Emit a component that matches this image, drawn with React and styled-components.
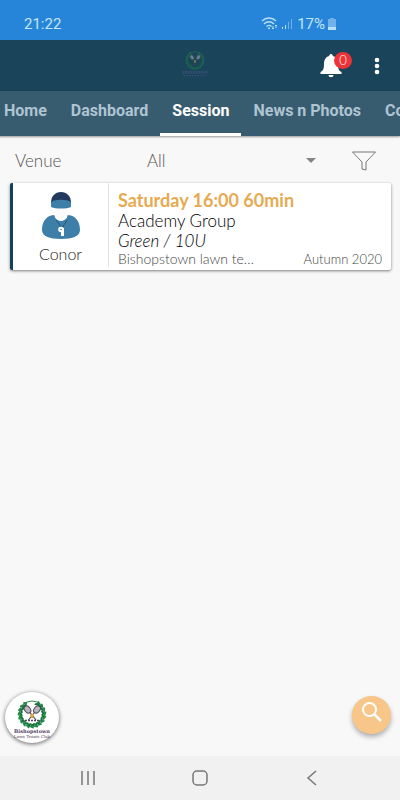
import { useState } from "react";
import styled, { createGlobalStyle } from "styled-components";

const TABS = ["Home", "Dashboard", "Session", "News n Photos", "Coaches"];

const SESSIONS = [
  {
    id: 1,
    coach: "Conor",
    time: "Saturday 16:00 60min",
    group: "Academy Group",
    level: "Green / 10U",
    venue: "Bishopstown lawn tennis club",
    term: "Autumn 2020",
  },
];

const LEAVES = Array.from({ length: 17 }, (_, i) => 32 + i * 18.5 - 90);

function Crest() {
  return (
    <g>
      <circle cx="27" cy="21" r="13" fill="none" stroke="#2f8a4c" strokeWidth="1" />
      {LEAVES.map((a) => (
        <g key={a} transform={`rotate(${a} 27 21)`}>
          <ellipse cx="38" cy="20" rx="1.2" ry="2.6" fill="#14743a" transform="rotate(-35 38 20)" />
          <ellipse cx="40" cy="21" rx="1" ry="2.2" fill="#248849" transform="rotate(30 40 21)" />
        </g>
      ))}
      <g stroke="#4a4452" fill="#b9b5bf">
        <ellipse cx="22.5" cy="16.5" rx="2.8" ry="4" transform="rotate(-38 22.5 16.5)" />
        <ellipse cx="32" cy="16.5" rx="2.8" ry="4" transform="rotate(38 32 16.5)" />
        <path d="M25 19.500L31 27M29.500 19.500L23.500 27" fill="none" strokeWidth="1.2" />
      </g>
      <path d="M25 21h4l-1 4h-2z" fill="#d8a63a" />
      <path d="M20 27.500h14" stroke="#54405e" strokeWidth="1.600" strokeDasharray="2 1" />
    </g>
  );
}

function ClubLogo({ name }) {
  return (
    <svg width="54" height="50" viewBox="0 0 54 50" role="img" aria-label={name}>
      <Crest />
      <text x="27" y="40" textAnchor="middle" fontSize="5" fontWeight="700" fill="#563c66">
        Bishopstown
      </text>
      <text x="27" y="45" textAnchor="middle" fontSize="4" fill="#563c66">
        Lawn Tennis Club
      </text>
    </svg>
  );
}

function CoachIcon() {
  return (
    <svg width="40" height="48" viewBox="0 0 40 48" aria-hidden="true">
      <path d="M14 23C6 23 1 29 1 38c0 6 7 9 19 9s19-3 19-9c0-9-5-15-13-15 2 7-14 7-12 0z" fill="#3d7fa9" />
      <path d="M12 15c0 8 3 14 8 14s8-6 8-14z" fill="#fbfbfb" />
      <path d="M10 11C10 4 14 0 20 0s10 4 10 11z" fill="#233a5e" />
      <path d="M10 10c4-3 16-3 20 0v5c-5 2-15 2-20 0z" fill="#3d7fa9" />
      <path d="M15 28l6 8 5-8" fill="none" stroke="#234a68" strokeWidth="0.800" />
      <circle cx="20" cy="37.500" r="2.800" fill="#fff" />
      <path d="M20 36h3v8h-3z" fill="#fff" />
      <circle cx="20" cy="37.500" r="0.800" fill="#3d7fa9" />
    </svg>
  );
}

export default function App() {
  const [activeTab, setActiveTab] = useState("Session");
  const [venue, setVenue] = useState("All");

  return (
    <>
      <GlobalStyle />
      <Screen>
        <StatusBar>
          <span>21:22</span>
          <StatusRight>
            <svg width="18" height="16" viewBox="0 0 18 16" fill="none" stroke="#b9e0f7" strokeWidth="1.300">
              <path d="M1 5c4-4 10-4 14 0M3 8c3-3 7-3 10 0M5.500 10.500c2-1.500 3.500-1.500 5 0" />
              <path d="M7 12h2l-1 1zM12 10v3m-1-1l1 1 1-1M15 12V9m-1 1l1-1 1 1" strokeWidth="1" />
            </svg>
            <svg width="12" height="12" viewBox="0 0 12 12" fill="#b9e0f7">
              <path d="M0 9h1v2H0zM3 7h1v4H3z" />
              <path d="M6 4h1v7H6zM9 1h1v10H9z" opacity="0.5" />
            </svg>
            <span>17%</span>
            <svg width="8" height="12" viewBox="0 0 8 12" fill="#b9e0f7">
              <path d="M2 0h4v1h2v9H0V1h2z" opacity="0.5" />
              <path d="M0 9h8v3H0z" />
            </svg>
          </StatusRight>
        </StatusBar>

        <AppBar>
          <span />
          <HeaderLogo>
            <svg width="28" height="28" viewBox="7 4 40 42" role="img" aria-label="Club crest">
              <Crest />
              <path d="M8 39h38" stroke="#4c5685" strokeWidth="4" strokeDasharray="3 1" />
              <path d="M10 44h34" stroke="#4c5685" strokeWidth="2" strokeDasharray="3 1" />
            </svg>
          </HeaderLogo>
          <Actions>
            <BellButton aria-label="Notifications">
              <svg width="22" height="24" viewBox="0 0 22 24" fill="#fff">
                <path d="M11 0c-1.300 0-1.800 1-1.800 2C5.500 3 4 6 4 10c0 5-1 7-3.500 8v2h21v-2C19 17 18 15 18 10c0-4-1.500-7-5.200-8 0-1-.5-2-1.800-2zM8.500 21h5c0 3-5 3-5 0z" />
              </svg>
              <Badge>0</Badge>
            </BellButton>
            <IconButton aria-label="More options">
              <svg width="6" height="18" viewBox="0 0 6 18" fill="#fff">
                <circle cx="3" cy="3" r="2.300" />
                <circle cx="3" cy="9" r="2.300" />
                <circle cx="3" cy="15" r="2.300" />
              </svg>
            </IconButton>
          </Actions>
        </AppBar>

        <Tabs>
          {TABS.map((tab) => (
            <Tab key={tab} $active={tab === activeTab} onClick={() => setActiveTab(tab)}>
              {tab}
            </Tab>
          ))}
        </Tabs>

        <Content>
          <Filters>
            <VenueLabel htmlFor="venue">Venue</VenueLabel>
            <SelectWrap>
              <VenueSelect id="venue" value={venue} onChange={(e) => setVenue(e.target.value)}>
                <option>All</option>
              </VenueSelect>
              <svg width="10" height="5" viewBox="0 0 10 5" fill="#858585">
                <path d="M0 0h10L5 5z" />
              </svg>
            </SelectWrap>
            <IconButton aria-label="Filter">
              <svg width="24" height="20" viewBox="0 0 24 20" fill="none" stroke="#777">
                <path d="M.5 1h23L14 11v8l-4-1v-7z" />
              </svg>
            </IconButton>
          </Filters>

          {SESSIONS.map((s) => (
            <SessionCard key={s.id}>
              <Coach>
                <CoachIcon />
                <CoachName>{s.coach}</CoachName>
              </Coach>
              <Details>
                <Time>{s.time}</Time>
                <Group>{s.group}</Group>
                <Level>{s.level}</Level>
                <Meta>
                  <VenueName>{s.venue}</VenueName>
                  <Term>{s.term}</Term>
                </Meta>
              </Details>
            </SessionCard>
          ))}
        </Content>

        <FloatingRow>
          <ClubButton>
            <ClubLogo name="Bishopstown Lawn Tennis Club" />
          </ClubButton>
          <SearchButton aria-label="Search">
            <svg width="20" height="20" viewBox="0 0 20 20" fill="none" stroke="#fff" strokeWidth="2">
              <circle cx="7.500" cy="7.500" r="6.500" />
              <path d="M12 12l7 7" strokeWidth="2.500" />
            </svg>
          </SearchButton>
        </FloatingRow>

        <SystemNav>
          <IconButton aria-label="Recent apps">
            <svg width="16" height="16" viewBox="0 0 16 16" stroke="#777" strokeWidth="1.500">
              <path d="M2 1v14M8 1v14M14 1v14" />
            </svg>
          </IconButton>
          <IconButton aria-label="Home screen">
            <svg width="16" height="16" viewBox="0 0 16 16" fill="none" stroke="#777" strokeWidth="1.500">
              <rect x="1" y="1" width="14" height="14" rx="4" />
            </svg>
          </IconButton>
          <IconButton aria-label="Back">
            <svg width="16" height="16" viewBox="0 0 16 16" fill="none" stroke="#777" strokeWidth="1.500">
              <path d="M12 1L4 8l8 7" />
            </svg>
          </IconButton>
        </SystemNav>
      </Screen>
    </>
  );
}

/* ============ Styles ============ */
const GlobalStyle = createGlobalStyle`
  * {
    box-sizing: border-box;
  }
  body {
    margin: 0;
    background: #f8f8f8;
    font-family: Lato, sans-serif;
  }
  svg {
    display: block;
    flex-shrink: 0;
  }
  button {
    border: 0;
    padding: 0;
    background: none;
    font: inherit;
    cursor: pointer;
  }
`;
const Screen = styled.div`
  min-height: 100vh;
  display: flex;
  flex-direction: column;
  overflow: hidden;
`;
const StatusBar = styled.div`
  height: 40px;
  padding: 8px 64px 0 24px;
  display: flex;
  align-items: center;
  justify-content: space-between;
  background: #2685d8;
  color: #c2e6fa;
  font: 15px/20px Roboto, sans-serif;
`;
const StatusRight = styled.div`
  display: flex;
  align-items: center;
  gap: 3px;
`;
const AppBar = styled.header`
  height: 51px;
  padding: 0 20px;
  display: grid;
  grid-template-columns: 1fr auto 1fr;
  align-items: center;
  background: #19445a;
`;
const HeaderLogo = styled.div`
  margin: 0 10px 6px 0;
  opacity: 0.5;
`;
const Actions = styled.div`
  display: flex;
  align-items: center;
  justify-content: flex-end;
  gap: 32px;
`;
const IconButton = styled.button`
  display: grid;
  place-items: center;
`;
const BellButton = styled(IconButton)`
  position: relative;
`;
const Badge = styled.span`
  position: absolute;
  top: -2px;
  left: 14px;
  width: 18px;
  height: 17px;
  border-radius: 50%;
  background: #ee3338;
  color: #fff;
  font-size: 13px;
  font-weight: 300;
  line-height: 17px;
  text-align: center;
`;
const Tabs = styled.nav`
  height: 45px;
  display: flex;
  margin-left: -8px;
  background: #375c70;
  box-shadow: 0 1px 2px rgba(0, 0, 0, 0.4);
`;
const Tab = styled.button`
  && {
    flex-shrink: 0;
    padding: 0 12px 2px;
    border-bottom: 3px solid ${(p) => (p.$active ? "#fff" : "transparent")};
    color: ${(p) => (p.$active ? "#fff" : "#afc4d2")};
    font: 700 16px/20px Roboto, sans-serif;
  }
`;
const Content = styled.main`
  flex: 1;
  padding: 0 9px 0 10px;
`;
const Filters = styled.div`
  display: flex;
  align-items: center;
  height: 47px;
  padding: 2px 15px 0 5px;
  color: #555;
  font-size: 17px;
  font-weight: 300;
`;
const VenueLabel = styled.label`
  width: 132px;
`;
const SelectWrap = styled.div`
  flex: 1;
  display: flex;
  align-items: center;
  margin-right: 36px;
`;
const VenueSelect = styled.select`
  flex: 1;
  appearance: none;
  border: 0;
  padding: 0;
  background: transparent;
  color: inherit;
  font: inherit;
`;
const SessionCard = styled.article`
  display: flex;
  padding: 0 0 3px;
  border-left: 3px solid #12405f;
  border-radius: 2px;
  background: #fff;
  box-shadow: 0 1px 3px rgba(0, 0, 0, 0.5);
`;
const Coach = styled.div`
  width: 96px;
  padding-top: 9px;
  display: flex;
  flex-direction: column;
  align-items: center;
  border-right: 1px solid #e4e4e4;
`;
const CoachName = styled.div`
  margin-top: 4px;
  color: #222;
  font-size: 16px;
  font-weight: 300;
  line-height: 20px;
`;
const Details = styled.div`
  flex: 1;
  min-width: 0;
  padding: 6px 9px 0;
  color: #000;
  font-size: 17px;
  font-weight: 300;
  line-height: 20px;
`;
const Time = styled.div`
  color: #e6aa50;
  font-size: 18px;
  font-weight: 700;
  line-height: 22px;
`;
const Group = styled.div``;
const Level = styled.div`
  font-style: italic;
`;
const Meta = styled.div`
  display: flex;
  justify-content: space-between;
  line-height: 16px;
  color: #444;
`;
const VenueName = styled.span`
  width: 140px;
  overflow: hidden;
  font-size: 14px;
  text-overflow: ellipsis;
  white-space: nowrap;
`;
const Term = styled.span`
  font-size: 13px;
`;
const FloatingRow = styled.div`
  display: flex;
  align-items: center;
  justify-content: space-between;
  padding: 0 9px 13px 5px;
`;
const ClubButton = styled.button`
  width: 54px;
  height: 51px;
  border-radius: 50%;
  box-shadow: 0 1px 4px rgba(0, 0, 0, 0.6);

  && {
    background: #fff;
    font-family: "DejaVu Serif", serif;
  }
`;
const SearchButton = styled.button`
  display: grid;
  place-items: center;
  width: 39px;
  height: 38px;
  margin-bottom: 6px;
  border-radius: 50%;
  box-shadow: 0 3px 5px rgba(0, 0, 0, 0.3);

  && {
    padding-bottom: 6px;
    background: #f8c688;
  }
`;
const SystemNav = styled.footer`
  height: 44px;
  padding: 0 32px;
  display: grid;
  grid-template-columns: repeat(3, 1fr);
  place-items: center;
  background: #f1f1f1;
`;
